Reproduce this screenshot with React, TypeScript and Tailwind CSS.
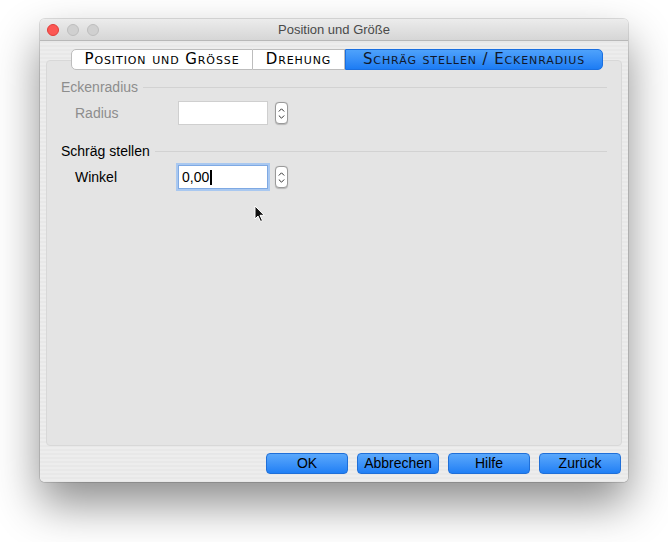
import React from 'react';

// Spinner (Stepper) wie unter macOS
function Stepper() {
  return (
    <div className="w-[13px] h-[22px] rounded-[4px] border border-[#9a9a9a] bg-white flex flex-col items-center justify-center gap-[3px] shadow-[0_0.5px_1px_rgba(0,0,0,0.2)]">
      <svg width="7" height="4" viewBox="0 0 7 4"><path d="M0.8 3.5 L3.5 0.8 L6.2 3.5" fill="none" stroke="#333" strokeWidth="1" /></svg>
      <svg width="7" height="4" viewBox="0 0 7 4"><path d="M0.8 0.5 L3.5 3.2 L6.2 0.5" fill="none" stroke="#333" strokeWidth="1" /></svg>
    </div>
  );
}

function Field({ label, value, dim, focus }: { label: string; value?: string; dim?: boolean; focus?: boolean }) {
  return (
    <div className="flex items-center h-[24px]">
      <span className={`w-[117px] pl-[14px] text-[14px] ${dim ? 'text-[#8d8d8d]' : 'text-black'}`}>{label}</span>
      <div
        className={`w-[90px] h-[24px] bg-white flex items-center pl-[3px] text-[14px] text-black ${
          focus ? 'border border-[#7fa9e3] shadow-[0_0_0_2px_#a9c8f0]' : 'border border-[#cfcfcf]'
        }`}
      >
        {value}
        {focus && <span className="w-[2px] h-[15px] bg-black ml-[1px]" />}
      </div>
      <div className="ml-[7px]">
        <Stepper />
      </div>
    </div>
  );
}

function Section({ title, dim, children }: { title: string; dim?: boolean; children: React.ReactNode }) {
  return (
    <div className="flex flex-col">
      <div className="flex items-center h-[16px]">
        <span className={`text-[14px] ${dim ? 'text-[#8d8d8d]' : 'text-black'}`}>{title}</span>
        <div className="flex-1 ml-[5px] mr-[14px] h-[1px] bg-[#fbfbfb] border-t border-[#d2d2d2]" />
      </div>
      <div className="mt-[6px]">{children}</div>
    </div>
  );
}

const tabs = [
  { name: 'Position und Grösse', w: 'w-[182px]', active: false },
  { name: 'Drehung', w: 'w-[92px]', active: false },
  { name: 'Schräg stellen / Eckenradius', w: 'w-[258px]', active: true },
];

const buttons = ['OK', 'Abbrechen', 'Hilfe', 'Zurück'];

export default function App() {
  return (
    <div className="w-[668px] h-[542px] bg-white pt-[19px] pl-[40px]" style={{ fontFamily: '"Liberation Sans", Arial, sans-serif' }}>
      <div className="w-[588px] h-[463px] rounded-[5px] overflow-hidden flex flex-col bg-[repeating-linear-gradient(180deg,#ededed_0px,#ededed_2px,#e8e8e8_2px,#e8e8e8_4px)] shadow-[0_22px_45px_rgba(0,0,0,0.45),0_0_0_1px_rgba(0,0,0,0.12)]">
        {/* Titelleiste */}
        <div className="h-[22px] flex items-center relative bg-gradient-to-b from-[#ececec] to-[#d6d6d6] border-b border-[#b8b8b8]">
          <div className="flex gap-[8px] pl-[7px]">
            <span className="w-[12px] h-[12px] rounded-full bg-[#fc5753] border border-[#df3d39]" />
            <span className="w-[12px] h-[12px] rounded-full bg-[#d0d0d0] border border-[#bdbdbd]" />
            <span className="w-[12px] h-[12px] rounded-full bg-[#d0d0d0] border border-[#bdbdbd]" />
          </div>
          <span className="absolute inset-0 flex items-center justify-center text-[13px] text-[#4a4a4a]">Position und Größe</span>
        </div>

        {/* Tabs */}
        <div className="flex ml-[31px] mt-[8px] h-[21px] relative z-10">
          {tabs.map((t, i) => (
            <div
              key={t.name}
              className={`${t.w} h-[21px] flex items-center justify-center text-[15px] tracking-[0.9px] [font-variant:small-caps] ${
                t.active
                  ? 'bg-gradient-to-b from-[#4ea2fb] to-[#1c7cf4] border border-[#1a6fe0] rounded-r-[5px] text-[#10182a]'
                  : `bg-white border border-[#bdbdbd] text-black ${i === 0 ? 'rounded-l-[5px]' : 'border-l-0'}`
              }`}
              style={{ fontFamily: '"DejaVu Sans", "Liberation Sans", sans-serif' }}
            >
              {t.name}
            </div>
          ))}
        </div>

        {/* Inhalt */}
        <div className="relative mx-[6px] -mt-[10px] h-[386px] rounded-[4px] bg-[#e4e4e4] border border-[#d8d8d8] pl-[14px] pt-[18px] flex flex-col gap-[18px]">
          <Section title="Eckenradius" dim>
            <Field label="Radius" dim />
          </Section>
          <Section title="Schräg stellen">
            <Field label="Winkel" value="0,00" focus />
          </Section>
          {/* Mauszeiger */}
          <svg className="absolute left-[207px] top-[144px]" width="12" height="18" viewBox="0 0 12 18">
            <path d="M1 1 L1 14 L4 11 L6.5 16.5 L8.5 15.6 L6 10.3 L10.2 10.3 Z" fill="#111" stroke="#fff" strokeWidth="1" />
          </svg>
        </div>

        {/* Schaltflächen */}
        <div className="flex justify-end gap-[9px] pr-[7px] mt-[7px]">
          {buttons.map((b) => (
            <button
              key={b}
              className="w-[82px] h-[21px] rounded-[4px] bg-gradient-to-b from-[#5aa8fb] to-[#1f7ff5] border border-[#1f6fd8] text-[14px] text-black flex items-center justify-center"
            >
              {b}
            </button>
          ))}
        </div>
      </div>
    </div>
  );
}
